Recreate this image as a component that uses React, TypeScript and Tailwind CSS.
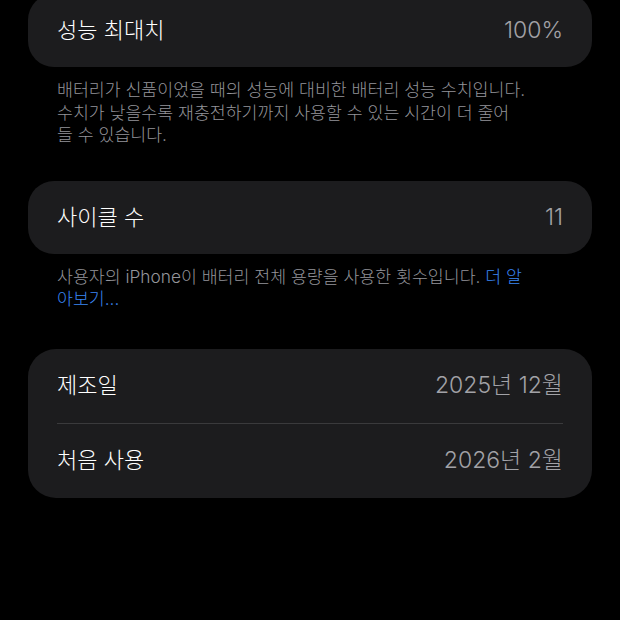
import React from "react"

const font = { fontFamily: '"Inter", "Noto Sans CJK KR", sans-serif' }

const Row = ({ label, value, tall }: { label: string; value: string; tall?: boolean }) => (
  <div className={`${tall ? "h-[74px]" : "h-[73px]"} flex items-center justify-between px-[29px]`}>
    <span className="text-[22px] font-light text-white">{label}</span>
    <span className="text-[23px] font-light text-[#a2a2a7]">{value}</span>
  </div>
)

const Footer = ({ children }: { children: React.ReactNode }) => (
  <p className="px-[57px] pt-[12px] text-[17.3px] leading-[22.5px] font-light text-[#94949a]">{children}</p>
)

export default function App() {
  return (
    <div className="w-[620px] h-[620px] bg-black overflow-hidden" style={font}>
      <div className="mx-[28px] mt-[-6px] bg-[#1c1c1e] rounded-[26px]">
        <Row label="성능 최대치" value="100%" />
      </div>
      <Footer>
        배터리가 신품이었을 때의 성능에 대비한 배터리 성능 수치입니다.
        <br />
        수치가 낮을수록 재충전하기까지 사용할 수 있는 시간이 더 줄어
        <br />
        들 수 있습니다.
      </Footer>

      <div className="mx-[28px] mt-[34px] bg-[#1c1c1e] rounded-[26px]">
        <Row label="사이클 수" value="11" />
      </div>
      <Footer>
        사용자의 iPhone이 배터리 전체 용량을 사용한 횟수입니다.{" "}
        <span className="text-[#3a86f5]">더 알</span>
        <br />
        <span className="text-[#3a86f5]">아보기...</span>
      </Footer>

      <div className="mx-[28px] mt-[38px] bg-[#1c1c1e] rounded-[28px]">
        <Row label="제조일" value="2025년 12월" tall />
        <div className="mx-[29px] h-px bg-[#3a3a3c]" />
        <Row label="처음 사용" value="2026년 2월" tall />
      </div>
    </div>
  )
}
